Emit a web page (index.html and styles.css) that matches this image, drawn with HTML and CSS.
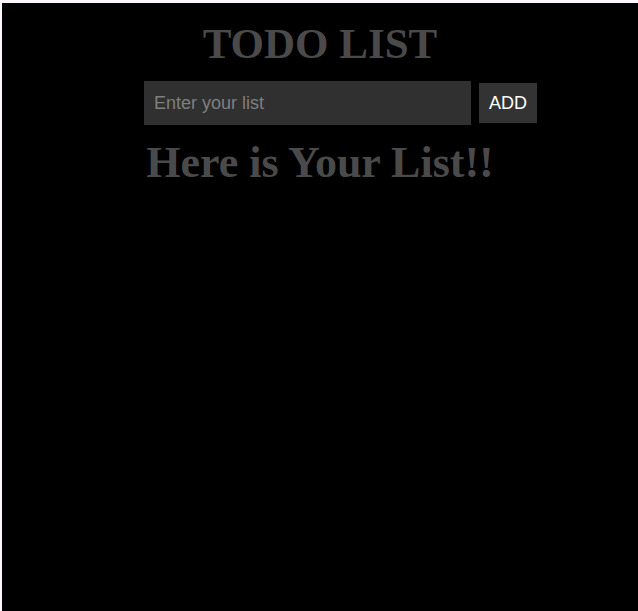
FILE: index.html
```html
<!DOCTYPE html>
<html>
<head>
<meta charset="utf-8">
<title>Todo List</title>
<link rel="stylesheet" href="styles.css">
</head>
<body>
<div class="page">
  <h1 class="title">TODO LIST</h1>
  <form class="todo-form">
    <input class="todo-input" type="text" placeholder="Enter your list">
    <button class="add-btn" type="button">ADD</button>
  </form>
  <h2 class="list-title">Here is Your List!!</h2>
  <ul class="todo-list"></ul>
</div>
</body>
</html>
```
FILE: styles.css
```css
html {
  background: #fcf5fb;
}
body {
  margin: 0;
  padding: 3px 0 0 2px;
  height: 611px;
  box-sizing: border-box;
  overflow: hidden;
}
.page {
  background: #000;
  height: 608px;
  padding-top: 17px;
  box-sizing: border-box;
}
.title,
.list-title {
  margin: 0;
  text-align: center;
  font-family: "Liberation Serif", serif;
  font-weight: bold;
  font-size: 43px;
  line-height: 48px;
  color: #4a4a4a;
}
.todo-form {
  display: flex;
  align-items: center;
  gap: 8px;
  margin: 13px 0 0 142px;
}
.todo-input {
  width: 327px;
  height: 44px;
  box-sizing: border-box;
  border: none;
  outline: none;
  padding: 0 10px;
  background: #303030;
  color: #ddd;
  font-family: "Liberation Sans", Arial, sans-serif;
  font-size: 18px;
}
.todo-input::placeholder {
  color: #7f7f7f;
}
.add-btn {
  width: 58px;
  height: 40px;
  border: none;
  padding: 0;
  background: #333;
  color: #fff;
  font-family: "Liberation Sans", Arial, sans-serif;
  font-size: 18px;
}
.list-title {
  margin-top: 14px;
  font-size: 44px;
}
.todo-list {
  margin: 0;
  padding: 0;
  list-style: none;
}
```
